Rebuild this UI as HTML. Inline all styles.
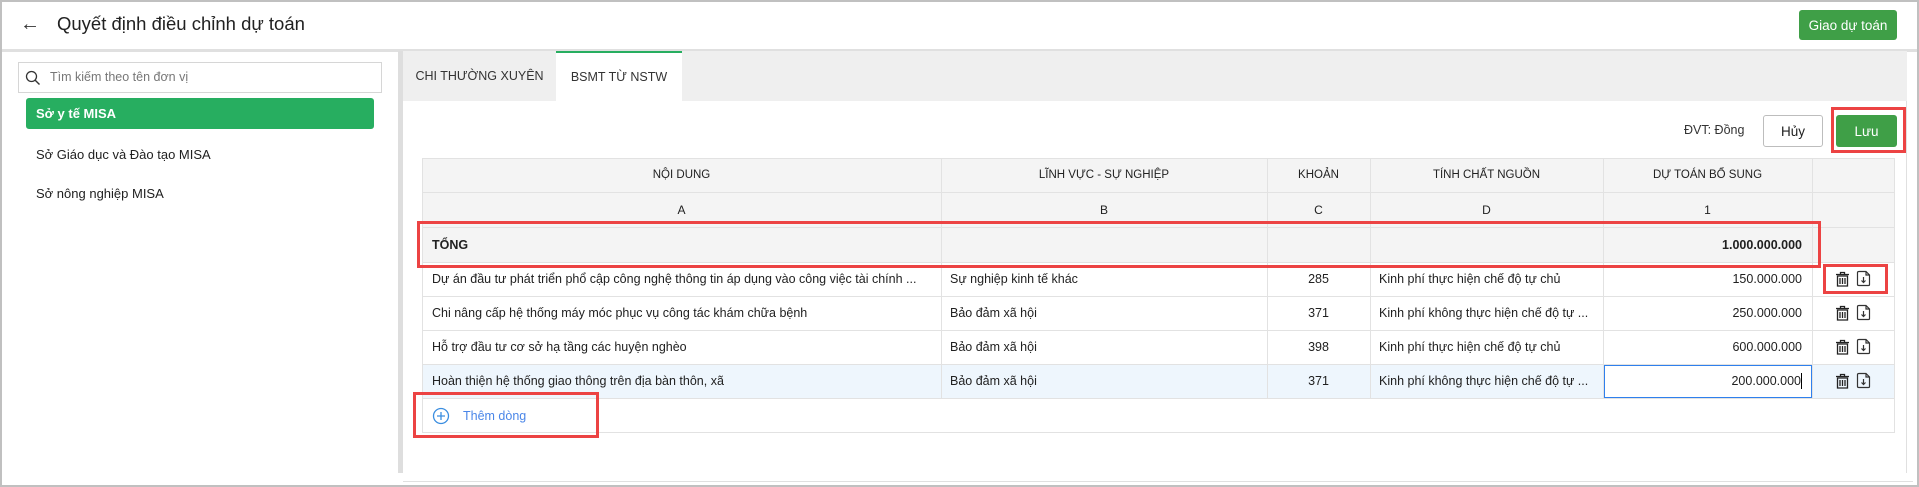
<!DOCTYPE html>
<html><head><meta charset="utf-8"><style>
*{box-sizing:border-box;margin:0;padding:0}
body{width:1919px;height:487px;position:relative;overflow:hidden;background:#fff;font-family:"Liberation Sans",Arial,sans-serif;color:#212121;font-size:12.5px}
.a{position:absolute}
.frame{left:0;top:0;width:1919px;height:487px;border:2px solid #c0c0c0;pointer-events:none}
.hl{position:absolute;background:#e2e2e2}
.cell{position:absolute;display:flex;align-items:center;white-space:nowrap;overflow:hidden}
.red{position:absolute;border:3px solid #ec4343}
</style></head><body>
<div class="a" style="left:20px;top:13px;font-size:20px;color:#333">&#8592;</div>
<div class="a" style="left:57px;top:13px;font-size:18.5px;color:#212121">Quyết định điều chỉnh dự toán</div>
<div class="a" style="left:1799px;top:10px;width:98px;height:30px;background:#3f9f47;border-radius:3px;color:#fff;font-size:13.5px;display:flex;align-items:center;justify-content:center">Giao dự toán</div>
<div class="hl" style="left:0;top:49px;width:1919px;height:3px;background:#e0e0e0"></div>
<div class="a" style="left:18px;top:62px;width:364px;height:31px;border:1px solid #d6d6d6;background:#fff"></div>
<svg class="a" style="left:25px;top:70px" width="16" height="16" viewBox="0 0 16 16"><circle cx="6.5" cy="6.5" r="5" fill="none" stroke="#333" stroke-width="1.3"/><path d="M10.2 10.2L14.5 14.5" stroke="#333" stroke-width="1.4"/></svg>
<div class="a" style="left:50px;top:70px;font-size:12.5px;color:#777">Tìm kiếm theo tên đơn vị</div>
<div class="a" style="left:26px;top:98px;width:348px;height:31px;background:#27ae60;border-radius:3px;color:#fff;font-weight:bold;font-size:13px;display:flex;align-items:center;padding-left:10px">Sở y tế MISA</div>
<div class="a" style="left:36px;top:147px;font-size:13px">Sở Giáo dục và Đào tạo MISA</div>
<div class="a" style="left:36px;top:186px;font-size:13px">Sở nông nghiệp MISA</div>
<div class="hl" style="left:398px;top:51px;width:5px;height:422px;background:#dedede"></div>
<div class="a" style="left:403px;top:51px;width:1504px;height:50px;background:#efefef"></div>
<div class="a" style="left:403px;top:51px;width:153px;height:50px;display:flex;align-items:center;justify-content:center;font-size:12.5px;color:#333">CHI THƯỜNG XUYÊN</div>
<div class="a" style="left:556px;top:51px;width:126px;height:50px;background:#fff;border-top:2px solid #27ae60;display:flex;align-items:center;justify-content:center;font-size:12.5px;color:#333">BSMT TỪ NSTW</div>
<div class="hl" style="left:1906px;top:101px;width:1px;height:372px;background:#e0e0e0"></div>
<div class="hl" style="left:403px;top:481px;width:1510px;height:1px;background:#e0e0e0"></div>
<div class="a" style="left:1684px;top:123px;font-size:12.5px;color:#333">ĐVT: Đồng</div>
<div class="a" style="left:1763px;top:115px;width:60px;height:32px;border:1px solid #bdbdbd;border-radius:3px;display:flex;align-items:center;justify-content:center;font-size:13.5px">Hủy</div>
<div class="a" style="left:1836px;top:115px;width:61px;height:32px;background:#3f9f47;border-radius:3px;color:#fff;display:flex;align-items:center;justify-content:center;font-size:13.5px">Lưu</div>
<div class="red" style="left:1831px;top:107px;width:75px;height:46px"></div>
<div class="a" style="left:422px;top:158px;width:1473px;height:105px;background:#f4f4f4"></div>
<div class="a" style="left:422px;top:365px;width:1473px;height:33px;background:#eef6fd"></div>
<div class="hl" style="left:422px;top:158px;width:1473px;height:1px"></div>
<div class="hl" style="left:422px;top:192px;width:1473px;height:1px"></div>
<div class="hl" style="left:422px;top:227px;width:1473px;height:1px"></div>
<div class="hl" style="left:422px;top:262px;width:1473px;height:1px"></div>
<div class="hl" style="left:422px;top:296px;width:1473px;height:1px"></div>
<div class="hl" style="left:422px;top:330px;width:1473px;height:1px"></div>
<div class="hl" style="left:422px;top:364px;width:1473px;height:1px"></div>
<div class="hl" style="left:422px;top:398px;width:1473px;height:1px"></div>
<div class="hl" style="left:422px;top:432px;width:1473px;height:1px"></div>
<div class="hl" style="left:422px;top:158px;width:1px;height:275px"></div>
<div class="hl" style="left:941px;top:158px;width:1px;height:240px"></div>
<div class="hl" style="left:1267px;top:158px;width:1px;height:240px"></div>
<div class="hl" style="left:1370px;top:158px;width:1px;height:240px"></div>
<div class="hl" style="left:1603px;top:158px;width:1px;height:240px"></div>
<div class="hl" style="left:1812px;top:158px;width:1px;height:240px"></div>
<div class="hl" style="left:1894px;top:158px;width:1px;height:275px"></div>
<div class="cell" style="left:422px;top:158px;width:519px;height:34px;justify-content:center;font-size:11.5px">NỘI DUNG</div>
<div class="cell" style="left:941px;top:158px;width:326px;height:34px;justify-content:center;font-size:11.5px">LĨNH VỰC - SỰ NGHIỆP</div>
<div class="cell" style="left:1267px;top:158px;width:103px;height:34px;justify-content:center;font-size:11.5px">KHOẢN</div>
<div class="cell" style="left:1370px;top:158px;width:233px;height:34px;justify-content:center;font-size:11.5px">TÍNH CHẤT NGUỒN</div>
<div class="cell" style="left:1603px;top:158px;width:209px;height:34px;justify-content:center;font-size:11.5px">DỰ TOÁN BỔ SUNG</div>
<div class="cell" style="left:422px;top:192px;width:519px;height:35px;justify-content:center;font-size:12px">A</div>
<div class="cell" style="left:941px;top:192px;width:326px;height:35px;justify-content:center;font-size:12px">B</div>
<div class="cell" style="left:1267px;top:192px;width:103px;height:35px;justify-content:center;font-size:12px">C</div>
<div class="cell" style="left:1370px;top:192px;width:233px;height:35px;justify-content:center;font-size:12px">D</div>
<div class="cell" style="left:1603px;top:192px;width:209px;height:35px;justify-content:center;font-size:12px">1</div>
<div class="cell" style="left:432px;top:227px;height:35px;font-weight:bold;font-size:12.5px">TỔNG</div>
<div class="cell" style="left:1603px;top:227px;width:199px;height:35px;justify-content:flex-end;font-weight:bold;font-size:12.5px">1.000.000.000</div>
<div class="red" style="left:417px;top:221px;width:1404px;height:47px"></div>
<div class="cell" style="left:432px;top:262px;width:500px;height:34px">Dự án đầu tư phát triển phổ cập công nghệ thông tin áp dụng vào công việc tài chính ...</div>
<div class="cell" style="left:950px;top:262px;height:34px">Sự nghiệp kinh tế khác</div>
<div class="cell" style="left:1267px;top:262px;width:103px;height:34px;justify-content:center">285</div>
<div class="cell" style="left:1379px;top:262px;width:220px;height:34px">Kinh phí thực hiện chế độ tự chủ</div>
<div class="cell" style="left:1603px;top:262px;width:199px;height:34px;justify-content:flex-end">150.000.000</div>
<div class="cell" style="left:432px;top:296px;height:34px">Chi nâng cấp hệ thống máy móc phục vụ công tác khám chữa bệnh</div>
<div class="cell" style="left:950px;top:296px;height:34px">Bảo đảm xã hội</div>
<div class="cell" style="left:1267px;top:296px;width:103px;height:34px;justify-content:center">371</div>
<div class="cell" style="left:1379px;top:296px;width:220px;height:34px">Kinh phí không thực hiện chế độ tự ...</div>
<div class="cell" style="left:1603px;top:296px;width:199px;height:34px;justify-content:flex-end">250.000.000</div>
<div class="cell" style="left:432px;top:330px;height:34px">Hỗ trợ đầu tư cơ sở hạ tầng các huyện nghèo</div>
<div class="cell" style="left:950px;top:330px;height:34px">Bảo đảm xã hội</div>
<div class="cell" style="left:1267px;top:330px;width:103px;height:34px;justify-content:center">398</div>
<div class="cell" style="left:1379px;top:330px;width:220px;height:34px">Kinh phí thực hiện chế độ tự chủ</div>
<div class="cell" style="left:1603px;top:330px;width:199px;height:34px;justify-content:flex-end">600.000.000</div>
<div class="cell" style="left:432px;top:364px;height:34px">Hoàn thiện hệ thống giao thông trên địa bàn thôn, xã</div>
<div class="cell" style="left:950px;top:364px;height:34px">Bảo đảm xã hội</div>
<div class="cell" style="left:1267px;top:364px;width:103px;height:34px;justify-content:center">371</div>
<div class="cell" style="left:1379px;top:364px;width:220px;height:34px">Kinh phí không thực hiện chế độ tự ...</div>
<div class="a" style="left:1604px;top:365px;width:208px;height:33px;border:1px solid #2f80ed;background:#fff"></div>
<div class="cell" style="left:1603px;top:364px;width:199px;height:34px;justify-content:flex-end">200.000.000<span style="display:inline-block;width:1px;height:16px;background:#000"></span></div>
<svg width="0" height="0" style="position:absolute"><defs>
<g id="tr"><path d="M1 3.5H14M5.5 3.5V1.5H9.5V3.5M2.5 5H12.5V15H2.5Z M5 7V13M7.5 7V13M10 7V13" fill="none" stroke="#222" stroke-width="1.3"/></g>
<g id="dc"><path d="M3 1.5H10L13.5 5V14.5Q13.5 15.5 12.5 15.5H3Q1.5 15.5 1.5 14.5V2.5Q1.5 1.5 3 1.5Z M10 1.5V5H13.5 M7.5 7V12.5M5.5 10.5L7.5 12.5L9.5 10.5" fill="none" stroke="#333" stroke-width="1.2"/></g>
</defs></svg>
<svg class="a" style="left:1835px;top:271px" width="16" height="17"><use href="#tr"/></svg>
<svg class="a" style="left:1856px;top:270px" width="16" height="17"><use href="#dc"/></svg>
<svg class="a" style="left:1835px;top:305px" width="16" height="17"><use href="#tr"/></svg>
<svg class="a" style="left:1856px;top:304px" width="16" height="17"><use href="#dc"/></svg>
<svg class="a" style="left:1835px;top:339px" width="16" height="17"><use href="#tr"/></svg>
<svg class="a" style="left:1856px;top:338px" width="16" height="17"><use href="#dc"/></svg>
<svg class="a" style="left:1835px;top:373px" width="16" height="17"><use href="#tr"/></svg>
<svg class="a" style="left:1856px;top:372px" width="16" height="17"><use href="#dc"/></svg>
<div class="red" style="left:1823px;top:264px;width:65px;height:30px"></div>
<svg class="a" style="left:432px;top:407px" width="18" height="18" viewBox="0 0 18 18"><circle cx="9" cy="9" r="7.5" fill="none" stroke="#3b8ee0" stroke-width="1.3"/><path d="M9 5V13M5 9H13" stroke="#3b8ee0" stroke-width="1.3"/></svg>
<div class="cell" style="left:463px;top:399px;height:33px;color:#4a86e8;font-size:12.5px">Thêm dòng</div>
<div class="red" style="left:413px;top:392px;width:186px;height:46px"></div>
<div class="a frame"></div>
</body></html>
